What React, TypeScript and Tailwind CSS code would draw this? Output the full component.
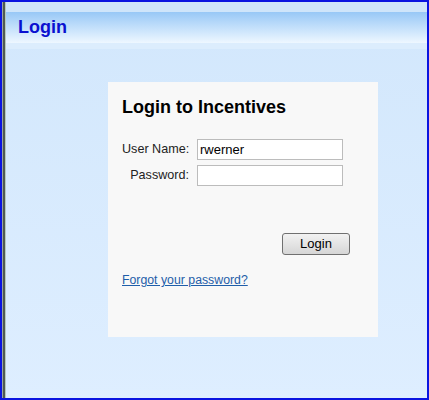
export default function App() {
  return (
    <div className="w-[429px] h-[400px] border-[2px] border-[#0a14e0] border-l-0 flex bg-[#0a14e0]" style={{ fontFamily: '"Liberation Sans", Arial, sans-serif' }}>
      {/* left window edge */}
      <div className="w-[2px] bg-[#0a14e0]" />
      <div className="w-[1px] bg-[#9aa6a0]" />
      <div className="w-[2px] bg-[#4e5a52]" />
      <div className="w-[1px] bg-[#b8c8c0]" />
      <div className="flex-1 flex flex-col bg-gradient-to-b from-[#d2e7fc] to-[#deeeff]">
        <div className="h-[10px] bg-[#cfe5fa]" />
        <div className="h-[31px] bg-gradient-to-b from-[#98c8f6] to-[#eef7ff] flex items-center pl-[12px]">
          <span className="text-[18px] font-bold text-[#0a10d0]">Login</span>
        </div>
        <div className="h-[6px] bg-[#dcedfd]" />
        <div className="pl-[102px] pt-[33px]">
          <div className="w-[270px] h-[255px] bg-[#f8f8f8] pl-[14px] pt-[14px] flex flex-col">
            <h1 className="text-[18px] font-bold text-black leading-[22px]">Login to Incentives</h1>
            <div className="mt-[21px] flex flex-col gap-[5px] text-[12.6px] text-[#222]">
              <div className="flex items-center">
                <span className="w-[67px] shrink-0 whitespace-nowrap text-right">User Name:</span>
                <input defaultValue="rwerner" className="ml-[8px] w-[146px] h-[21px] border border-[#bcbcbc] bg-white px-[2px] text-[13px] text-black outline-none" />
              </div>
              <div className="flex items-center">
                <span className="w-[67px] shrink-0 whitespace-nowrap text-right">Password:</span>
                <input type="password" className="ml-[8px] w-[146px] h-[21px] border border-[#bcbcbc] bg-white px-[2px] text-[13px] outline-none" />
              </div>
            </div>
            <div className="mt-[45px] pl-[160px]">
              <button className="w-[68px] h-[22px] border border-[#707070] rounded-[3px] bg-gradient-to-b from-[#f2f2f2] to-[#d6d6d6] text-[13px] text-black">Login</button>
            </div>
            <a href="#" className="mt-[18px] self-start text-[12.3px] leading-[14px] text-[#1f5ea9] underline">Forgot your password?</a>
          </div>
        </div>
      </div>
    </div>
  );
}
